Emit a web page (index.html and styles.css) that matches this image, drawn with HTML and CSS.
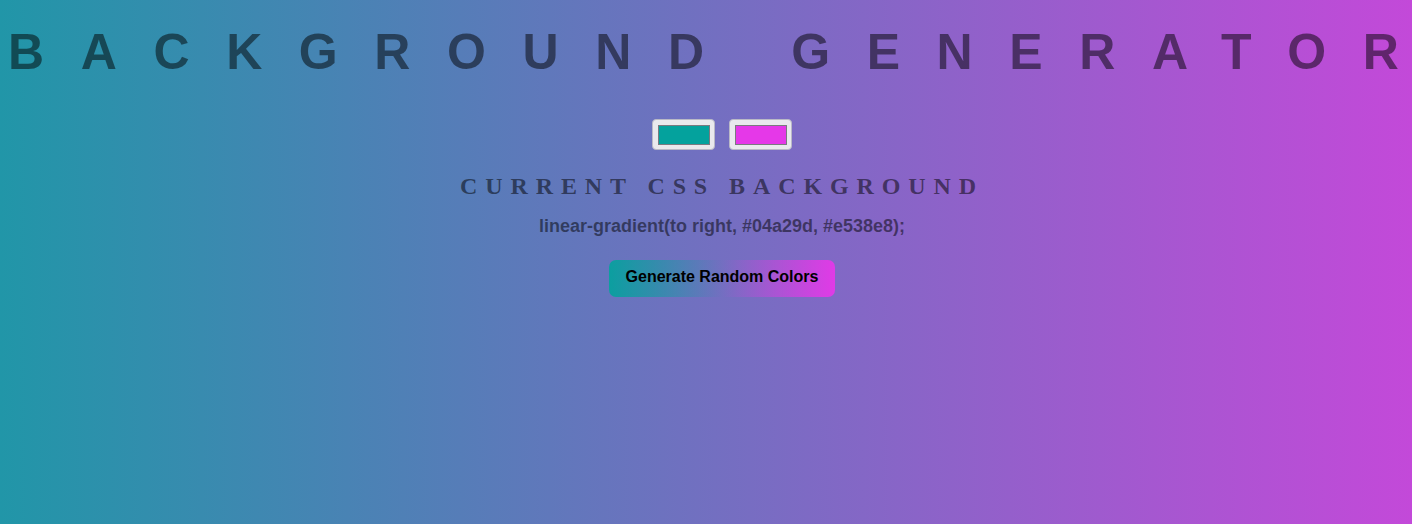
FILE: index.html
```html
<!DOCTYPE html>
<html lang="en">
<head>
<meta charset="utf-8">
<title>Background Generator</title>
<link rel="stylesheet" href="styles.css">
</head>
<body>
  <h1 class="title">Background Generator</h1>
  <main class="panel">
    <div class="pickers">
      <div class="picker"><span class="swatch swatch-a"></span></div>
      <div class="picker"><span class="swatch swatch-b"></span></div>
    </div>
    <h3 class="subtitle">Current CSS Background</h3>
    <p class="code">linear-gradient(to right, #04a29d, #e538e8);</p>
    <button class="random-btn" type="button">Generate Random Colors</button>
  </main>
</body>
</html>
```

FILE: styles.css
```css
html, body {
  margin: 0;
  padding: 0;
}

body {
  width: 1412px;
  height: 524px;
  overflow: hidden;
  background: linear-gradient(to right, #2196a8, #c349d9);
  font-family: "Liberation Sans", Arial, sans-serif;
  color: rgba(0, 0, 0, 0.5);
}

.title {
  margin: 0;
  padding: 23px 0 0 8px;
  font-family: "Liberation Sans", Arial, sans-serif;
  font-weight: 700;
  font-size: 50px;
  line-height: 58px;
  letter-spacing: 36.6px;
  text-transform: uppercase;
  white-space: nowrap;
  color: rgba(0, 0, 0, 0.5);
}

.panel {
  display: flex;
  flex-direction: column;
  align-items: center;
  padding-left: 32px;
}

.pickers {
  display: flex;
  gap: 14px;
  margin-top: 38px;
}

.picker {
  box-sizing: border-box;
  width: 63px;
  height: 31px;
  background: #e9e9ed;
  border: 1px solid #b9b9c6;
  border-radius: 4px;
  display: flex;
  align-items: center;
  justify-content: center;
  padding-left: 1px;
}

.swatch {
  box-sizing: border-box;
  width: 52px;
  height: 20px;
  border: 1px solid #7a7a80;
}

.swatch-a { background: #04a29d; }
.swatch-b { background: #e538e8; }

.subtitle {
  margin: 22px 0 0 0;
  font-family: "Liberation Serif", "Times New Roman", serif;
  font-weight: 700;
  font-size: 24px;
  line-height: 28px;
  letter-spacing: 7.9px;
  text-transform: uppercase;
  color: rgba(0, 0, 0, 0.52);
  padding-left: 0;
}

.code {
  margin: 16px 0 0 0;
  font-weight: 700;
  font-size: 18px;
  line-height: 21px;
  color: rgba(0, 0, 0, 0.5);
}

.random-btn {
  margin-top: 23px;
  box-sizing: border-box;
  height: 37px;
  padding: 8px 17px 11px;
  border: 0;
  border-radius: 7px;
  background: linear-gradient(to right, rgba(4, 162, 157, 0.92), rgba(110, 112, 190, 0.1), rgba(229, 56, 232, 0.95));
  font-family: "Liberation Sans", Arial, sans-serif;
  font-weight: 700;
  font-size: 16px;
  line-height: 18px;
  color: #000;
}
```
